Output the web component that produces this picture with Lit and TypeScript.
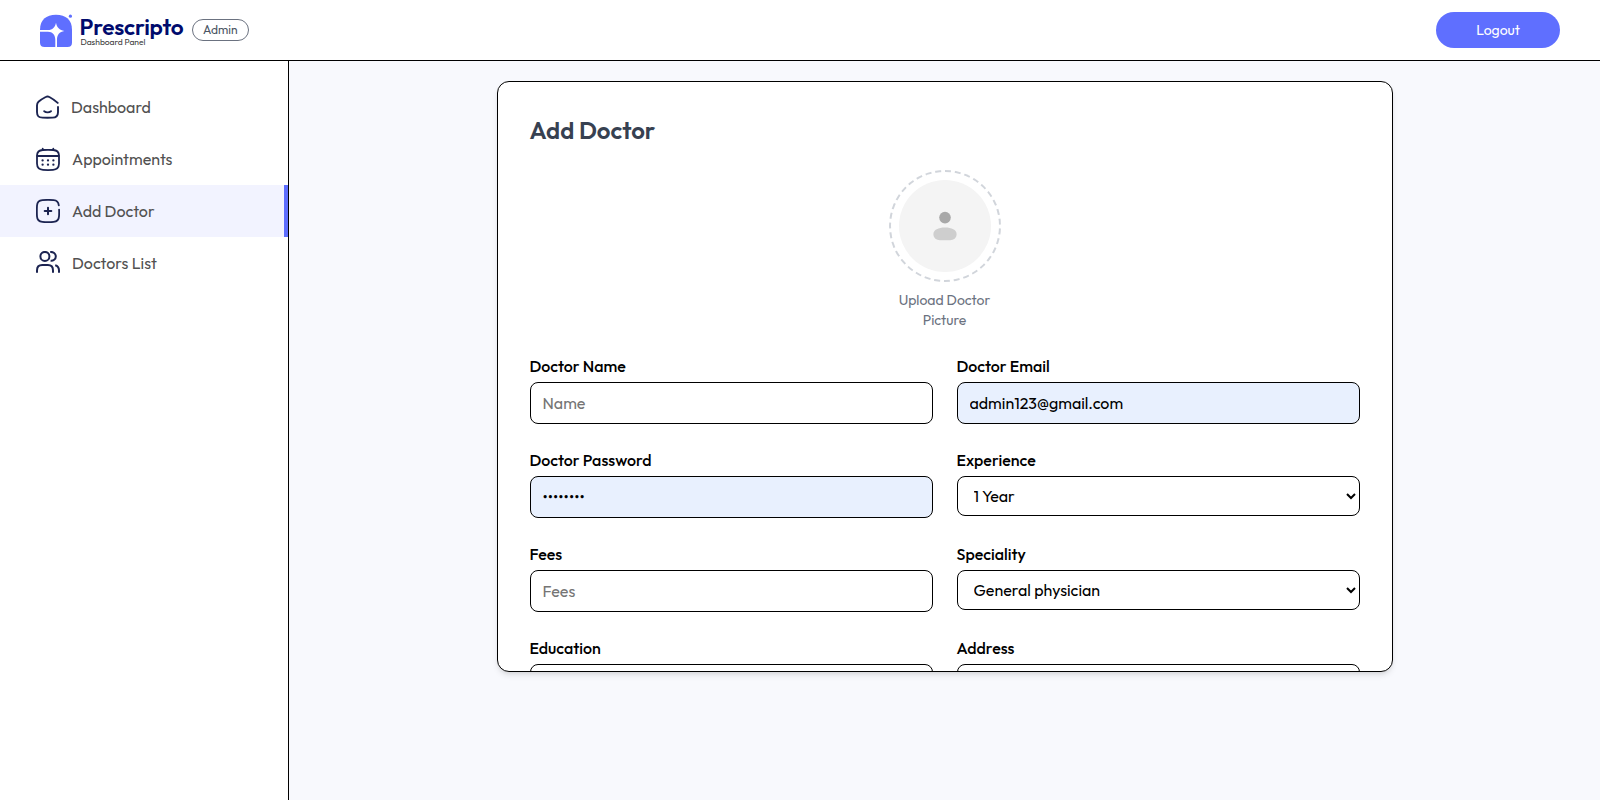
import { LitElement, html, css, svg } from "lit";
import { customElement, property } from "lit/decorators.js";
import { classMap } from "lit/directives/class-map.js";

const fontStack = css`"Outfit", "Lato", sans-serif`;

const homeIcon = html`<svg width="23" height="24" viewBox="0 0 23 24" fill="none" stroke="#1c2451" stroke-width="1.9" stroke-linecap="round" stroke-linejoin="round">
  <path d="M21.7 7.9 C19.6 6 16.5 3.7 13.4 2 C12.2 1.3 10.9 1.3 9.7 2 C7.2 3.3 4.6 4.9 2.5 6.7 C1.3 7.8 1 9 1 10.6 V17 C1 21.2 2.6 22.5 6.5 22.6 C9.8 22.8 13.2 22.8 16.5 22.6 C20.4 22.5 22 21.2 22 17.2 V12" />
  <path d="M8.2 16.2 C10 17.6 13.2 17.6 15 16.2" />
</svg>`;

const calendarIcon = html`<svg width="24" height="24" viewBox="0 0 24 24" fill="none" stroke="#1c2451" stroke-width="1.8" stroke-linecap="round" stroke-linejoin="round">
  <path d="M1 8.6 C1.1 4.8 2.8 3.3 6.8 3 C10.3 2.7 13.7 2.7 17.2 3 C21.2 3.3 22.9 4.8 23 8.6 V16.6 C22.9 21 21 22.7 17 22.9 C13.7 23.1 10.3 23.1 7 22.9 C3 22.7 1.1 21 1 16.6 Z" />
  <path d="M1.5 9 H22.5" stroke-width="2" />
  <path d="M6.7 1.7 V3 M17.3 1.7 V3" />
  <g fill="#1c2451" stroke="none">
    ${[6.6, 12, 17.4].map((x) => [13.4, 17.7].map((y) => svg`<circle cx=${x} cy=${y} r="1.15" />`))}
  </g>
</svg>`;

const addIcon = html`<svg width="24" height="24" viewBox="0 0 24 24" fill="none" stroke="#1c2451" stroke-width="1.8" stroke-linecap="round" stroke-linejoin="round">
  <path d="M23.1 10.6 C23.2 13 23.2 15.2 23 17.4 C22.8 21.2 21.4 22.6 17.6 22.9 C13.8 23.2 10.2 23.2 6.4 22.9 C2.6 22.6 1.2 21.2 1 17.4 C.8 13.8 .8 10.2 1 6.6 C1.2 2.8 2.6 1.4 6.4 1.1 C10.2 .8 13.8 .8 17.6 1.1 C21 1.3 22.4 2.6 22.8 6.4" />
  <path d="M12 8.7 V15.3 M8.7 12 H15.3" stroke-width="2" />
</svg>`;

const peopleIcon = html`<svg width="24" height="24" viewBox="0 0 24 24" fill="none" stroke="#1c2451" stroke-width="2" stroke-linecap="butt" stroke-linejoin="round">
  <circle cx="8.9" cy="5.4" r="4.5" />
  <path d="M14.2 .9 C17.2 .7 19.8 2.5 19.8 5.4 C19.8 8.3 17.2 10.1 14.6 9.8" />
  <path d="M1 21.8 V19.4 C1 16 3 14 6.2 14 H11.9 C15 14 17 16 17 19.4 V21.8" />
  <path d="M19.2 14.3 C21.7 15 23 16.9 23 19.6 V21.8" />
</svg>`;

@customElement("top-bar")
export class TopBar extends LitElement {
  static styles = css`
    :host { display: block; }
    .bar {
      display: flex; align-items: center; justify-content: space-between;
      height: 61px; padding: 0 40px; box-sizing: border-box;
      background: #fff; border-bottom: 1px solid #000; font-family: ${fontStack};
    }
    .brand { display: flex; align-items: center; gap: 8px; }
    .logo { display: block; overflow: visible; font-family: ${fontStack}; }
    .name { font-size: 22.6px; font-weight: 560; }
    .sub { font-size: 8.5px; }
    .pill {
      font-size: 12px; line-height: 16px; color: #4b5563;
      border: 1px solid #6b7280; border-radius: 999px; padding: 2px 10px;
    }
    .logout {
      font: 400 14px/20px ${fontStack}; color: #fff; background: #5f6fff;
      border: 0; border-radius: 999px; padding: 8px 40px; height: 36px;
    }
  `;
  render() {
    return html`<header class="bar">
      <div class="brand">
        <svg class="logo" width="144" height="36" viewBox="0 0 144 36">
          <path d="M0 18 C0 8 6 2.8 16 2.8 C26 2.8 32 8 32 18 V30.5 Q32 35 27.5 35 H4.5 Q0 35 0 30.5 Z" fill="#5f6fff" />
          <circle cx="30.4" cy="4.2" r="1.6" fill="#5f6fff" />
          <path d="M0 18 H8 C12.5 18 15.2 15.2 16 10.7 C16.9 15.5 19.5 18.1 24.3 18.9 C19.5 19.7 17 22.7 17 27.7 V35 H15.3 V27.7 C15.3 22.7 12.5 19.7 8 19.7 H0 Z" fill="#fff" />
          <text class="name" x="39.6" y="23" textLength="104" fill="#000b6d">Prescripto</text>
          <text class="sub" x="40.4" y="32.6" textLength="65" fill="#3c3c3c">Dashboard Panel</text>
        </svg>
        <span class="pill">Admin</span>
      </div>
      <button class="logout">Logout</button>
    </header>`;
  }
}

@customElement("side-nav")
export class SideNav extends LitElement {
  static styles = css`
    :host { display: block; width: 289px; flex: none; box-sizing: border-box; background: #fff; border-right: 1px solid #000; font-family: ${fontStack}; }
    .list { list-style: none; margin: 20px 0 0; padding: 0; }
    .item { display: flex; align-items: center; gap: 12px; height: 52px; padding: 0 36px; box-sizing: border-box; font-size: 16px; line-height: 24px; color: #515151; }
    .active { background: #f2f3ff; border-right: 4px solid #5f6fff; }
  `;
  render() {
    const items = [
      { label: "Dashboard", icon: homeIcon },
      { label: "Appointments", icon: calendarIcon },
      { label: "Add Doctor", icon: addIcon, active: true },
      { label: "Doctors List", icon: peopleIcon },
    ];
    return html`<ul class="list">
      ${items.map((i) => html`<li class=${classMap({ item: true, active: !!i.active })}>${i.icon}<span>${i.label}</span></li>`)}
    </ul>`;
  }
}

@customElement("form-field")
export class FormField extends LitElement {
  @property() label = "";
  @property() kind = "text";
  @property() value = "";
  @property() hint = "";
  static styles = css`
    :host { display: flex; flex-direction: column; gap: 4px; height: 70px; font-family: ${fontStack}; }
    .label { font-size: 16px; line-height: 24px; font-weight: 500; color: #000; }
    .box {
      font: 400 16px/24px ${fontStack}; color: #000; background: #fff; width: 100%;
      border: 1px solid #000; border-radius: 8px; box-sizing: border-box; margin: 0;
    }
    .input { height: 42px; padding: 8px 12px; }
    .input::placeholder { color: #757575; }
    .filled { background: #e8f0fe; }
    .select { height: 40px; padding: 8px 12px; }
  `;
  render() {
    return html`<label class="label">${this.label}</label>
      ${this.kind === "select"
        ? html`<select class="box select"><option>${this.value}</option></select>`
        : html`<input class=${classMap({ box: true, input: true, filled: !!this.value })} type=${this.kind} .value=${this.value} placeholder=${this.hint} />`}`;
  }
}

@customElement("app-root")
export class AppRoot extends LitElement {
  static styles = css`
    :host { display: flex; flex-direction: column; height: 100vh; overflow: hidden; background: #f8f9fd; font-family: ${fontStack}; }
    .body { display: flex; flex: 1; min-height: 0; }
    .main { flex: 1; display: flex; justify-content: center; align-items: flex-start; padding-top: 20px; }
    .card {
      width: 896px; height: 591px; box-sizing: border-box; overflow: hidden; padding: 32px;
      background: #fff; border: 1px solid #000; border-radius: 12px;
      box-shadow: 0 4px 6px -1px rgba(0,0,0,.1), 0 2px 4px -2px rgba(0,0,0,.1);
    }
    .title { margin: 0 0 24px; font-size: 24px; line-height: 32px; font-weight: 600; color: #374151; }
    .upload { display: flex; flex-direction: column; align-items: center; gap: 8px; margin-bottom: 24px; }
    .ring { width: 112px; height: 112px; box-sizing: border-box; padding: 8px; border: 2px dashed #d1d5db; border-radius: 50%; }
    .avatar { display: block; width: 92px; height: 92px; }
    .caption { margin: 0; font-size: 14px; line-height: 20px; color: #6b7280; text-align: center; }
    .grid { display: grid; grid-template-columns: 1fr 1fr; gap: 24px; }
  `;
  render() {
    return html`<top-bar></top-bar>
      <div class="body">
        <side-nav></side-nav>
        <main class="main">
          <section class="card">
            <h2 class="title">Add Doctor</h2>
            <div class="upload">
              <div class="ring">
                <svg class="avatar" viewBox="0 0 92 92">
                  <circle cx="46" cy="46" r="46" fill="#f4f4f4" />
                  <circle cx="46" cy="37.6" r="5.8" fill="#a8a8a8" />
                  <path d="M34.4 54 C34.4 50 39.5 47.6 46 47.6 C52.5 47.6 57.6 50 57.6 54 C57.6 58.3 54.5 60.2 51 60.2 H41 C37.5 60.2 34.4 58.3 34.4 54 Z" fill="#cecece" />
                </svg>
              </div>
              <p class="caption">Upload Doctor<br />Picture</p>
            </div>
            <div class="grid">
              <form-field label="Doctor Name" hint="Name"></form-field>
              <form-field label="Doctor Email" value="admin123@gmail.com"></form-field>
              <form-field label="Doctor Password" kind="password" value="password"></form-field>
              <form-field label="Experience" kind="select" value="1 Year"></form-field>
              <form-field label="Fees" hint="Fees"></form-field>
              <form-field label="Speciality" kind="select" value="General physician"></form-field>
              <form-field label="Education"></form-field>
              <form-field label="Address"></form-field>
            </div>
          </section>
        </main>
      </div>`;
  }
}
